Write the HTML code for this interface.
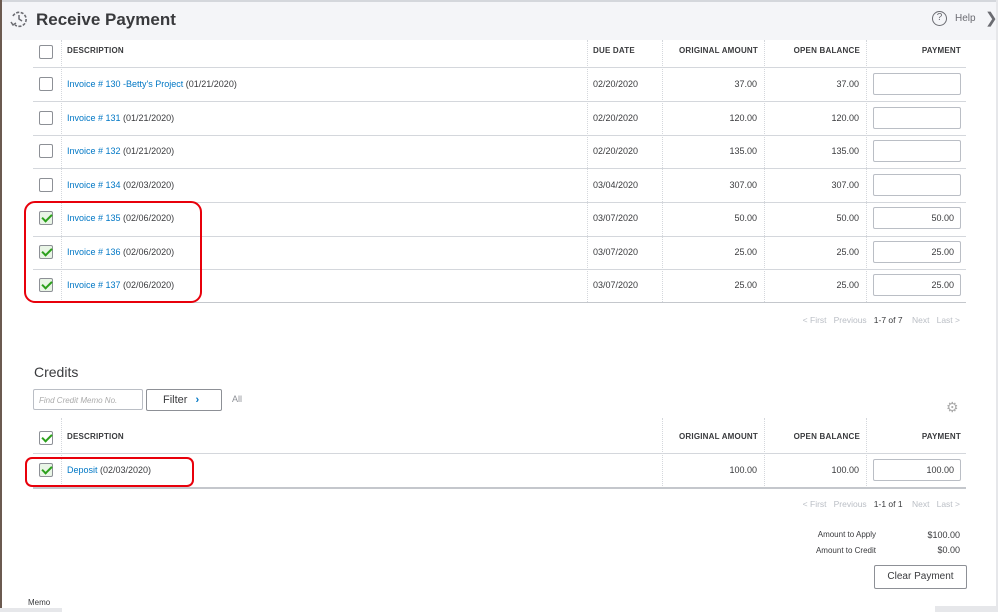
<!DOCTYPE html>
<html><head><meta charset="utf-8"><style>
*{margin:0;padding:0;box-sizing:border-box}
body{width:998px;height:612px;overflow:hidden;background:#fff;font-family:"Liberation Sans",sans-serif;position:relative;color:#393a3d}
.a{position:absolute}
.hd{font-size:8px;font-weight:bold;color:#393a3d;letter-spacing:.2px}
.t{font-size:9px;color:#393a3d;white-space:nowrap}
.lk{color:#0077c5}
.cb{position:absolute;width:14px;height:14px;border:1px solid #8d9096;border-radius:2px;background:#fff}
.cb.on{background:#e9f5e6}
.cb.on::after{content:"";position:absolute;left:4px;top:0px;width:4px;height:8px;border:solid #2ca01c;border-width:0 2px 2px 0;transform:rotate(45deg)}
.hl{position:absolute;height:1px;background:#d4d7dc}
.vl{position:absolute;width:0;border-left:1px dotted #d4d7dc}
.inp{position:absolute;width:88px;height:22px;border:1px solid #babec5;border-radius:2px;font-size:9px;text-align:right;padding:5px 6px 0 0;background:#fff}
.r{text-align:right}
.red{position:absolute;border:2px solid #e8000b;border-radius:11px}
.pg{font-size:8.5px;color:#babec5;white-space:nowrap;text-align:right;right:38px}
</style></head><body>
<div class="a" style="left:0;top:0;width:998px;height:40px;background:#f4f5f8;border-top:2px solid #d4d7dc"></div>
<div class="a" style="left:0;top:0;width:2px;height:612px;background:#6b5a50"></div>
<div class="a" style="left:996px;top:0;width:2px;height:612px;background:#e6e7ea"></div>
<svg class="a" style="left:9px;top:10px" width="20" height="18" viewBox="0 0 20 18"><path d="M4 6 A7 7 0 1 1 6 15" fill="none" stroke="#6b6c72" stroke-width="1.6" stroke-dasharray="3 1.5"/><path d="M10 5v4l3 2" fill="none" stroke="#6b6c72" stroke-width="1.5"/><path d="M2 12l2 3 3-2" fill="none" stroke="#6b6c72" stroke-width="1.5"/></svg>
<div class="a" style="left:36px;top:10px;font-size:17px;font-weight:bold;color:#393a3d">Receive Payment</div>
<div class="a" style="left:932px;top:11px;width:15px;height:15px;border:1.5px solid #6b6c72;border-radius:50%;font-size:10px;text-align:center;line-height:12px;color:#6b6c72">?</div>
<div class="a" style="left:955px;top:13px;font-size:10px;color:#6b6c72">Help</div>
<div class="a" style="left:985px;top:9px;font-size:15px;color:#6b6c72">&#x276F;</div>

<div class="vl" style="left:61px;top:40px;height:262px"></div>
<div class="vl" style="left:587px;top:40px;height:262px"></div>
<div class="vl" style="left:662px;top:40px;height:262px"></div>
<div class="vl" style="left:764px;top:40px;height:262px"></div>
<div class="vl" style="left:866px;top:40px;height:262px"></div>
<div class="cb" style="left:39px;top:45px"></div>
<div class="a hd" style="left:67px;top:46px">DESCRIPTION</div>
<div class="a hd" style="left:593px;top:46px">DUE DATE</div>
<div class="a hd r" style="left:662px;width:96px;top:46px">ORIGINAL AMOUNT</div>
<div class="a hd r" style="left:764px;width:96px;top:46px">OPEN BALANCE</div>
<div class="a hd r" style="left:866px;width:95px;top:46px">PAYMENT</div>
<div class="hl" style="left:33px;top:67px;width:933px"></div>

<div class="hl" style="left:33px;top:101px;width:933px"></div>
<div class="hl" style="left:33px;top:135px;width:933px"></div>
<div class="hl" style="left:33px;top:168px;width:933px"></div>
<div class="hl" style="left:33px;top:202px;width:933px"></div>
<div class="hl" style="left:33px;top:236px;width:933px"></div>
<div class="hl" style="left:33px;top:269px;width:933px"></div>
<div class="hl" style="left:33px;top:302px;width:933px;background:#c4c7cc"></div>

<div class="cb" style="left:39px;top:77px"></div><div class="a t" style="left:67px;top:79px"><span class="lk">Invoice # 130 -Betty's Project</span> (01/21/2020)</div><div class="a t" style="left:593px;top:79px">02/20/2020</div><div class="a t r" style="left:662px;width:95px;top:79px">37.00</div><div class="a t r" style="left:764px;width:95px;top:79px">37.00</div><div class="inp" style="left:873px;top:73px"></div>
<div class="cb" style="left:39px;top:111px"></div><div class="a t" style="left:67px;top:113px"><span class="lk">Invoice # 131</span> (01/21/2020)</div><div class="a t" style="left:593px;top:113px">02/20/2020</div><div class="a t r" style="left:662px;width:95px;top:113px">120.00</div><div class="a t r" style="left:764px;width:95px;top:113px">120.00</div><div class="inp" style="left:873px;top:107px"></div>
<div class="cb" style="left:39px;top:144px"></div><div class="a t" style="left:67px;top:146px"><span class="lk">Invoice # 132</span> (01/21/2020)</div><div class="a t" style="left:593px;top:146px">02/20/2020</div><div class="a t r" style="left:662px;width:95px;top:146px">135.00</div><div class="a t r" style="left:764px;width:95px;top:146px">135.00</div><div class="inp" style="left:873px;top:140px"></div>
<div class="cb" style="left:39px;top:178px"></div><div class="a t" style="left:67px;top:180px"><span class="lk">Invoice # 134</span> (02/03/2020)</div><div class="a t" style="left:593px;top:180px">03/04/2020</div><div class="a t r" style="left:662px;width:95px;top:180px">307.00</div><div class="a t r" style="left:764px;width:95px;top:180px">307.00</div><div class="inp" style="left:873px;top:174px"></div>
<div class="cb on" style="left:39px;top:211px"></div><div class="a t" style="left:67px;top:213px"><span class="lk">Invoice # 135</span> (02/06/2020)</div><div class="a t" style="left:593px;top:213px">03/07/2020</div><div class="a t r" style="left:662px;width:95px;top:213px">50.00</div><div class="a t r" style="left:764px;width:95px;top:213px">50.00</div><div class="inp" style="left:873px;top:207px">50.00</div>
<div class="cb on" style="left:39px;top:245px"></div><div class="a t" style="left:67px;top:247px"><span class="lk">Invoice # 136</span> (02/06/2020)</div><div class="a t" style="left:593px;top:247px">03/07/2020</div><div class="a t r" style="left:662px;width:95px;top:247px">25.00</div><div class="a t r" style="left:764px;width:95px;top:247px">25.00</div><div class="inp" style="left:873px;top:241px">25.00</div>
<div class="cb on" style="left:39px;top:278px"></div><div class="a t" style="left:67px;top:280px"><span class="lk">Invoice # 137</span> (02/06/2020)</div><div class="a t" style="left:593px;top:280px">03/07/2020</div><div class="a t r" style="left:662px;width:95px;top:280px">25.00</div><div class="a t r" style="left:764px;width:95px;top:280px">25.00</div><div class="inp" style="left:873px;top:274px">25.00</div>
<div class="red" style="left:24px;top:201px;width:178px;height:102px"></div>

<div class="a pg" style="top:315px">&lt; First &nbsp;&nbsp;Previous &nbsp;&nbsp;<span style="color:#393a3d">1-7 of 7</span> &nbsp;&nbsp;&nbsp;Next &nbsp;&nbsp;Last &gt;</div>

<div class="a" style="left:34px;top:364px;font-size:14px;color:#393a3d">Credits</div>
<div class="a" style="left:33px;top:389px;width:110px;height:21px;border:1px solid #babec5;border-radius:2px;font-size:8px;font-style:italic;color:#aaa;padding:6px 0 0 5px">Find Credit Memo No.</div>
<div class="a" style="left:146px;top:389px;width:76px;height:22px;border:1px solid #8d9096;border-radius:2px;font-size:11px;color:#393a3d;padding:4px 0 0 16px">Filter <span style="color:#0077c5;font-weight:bold;margin-left:5px">›</span></div>
<div class="a" style="left:232px;top:394px;font-size:9px;color:#8d9096">All</div>
<div class="a" style="left:946px;top:399px;font-size:14px;color:#aaa">⚙</div>

<div class="vl" style="left:61px;top:418px;height:70px"></div>
<div class="vl" style="left:662px;top:418px;height:70px"></div>
<div class="vl" style="left:764px;top:418px;height:70px"></div>
<div class="vl" style="left:866px;top:418px;height:70px"></div>
<div class="cb on" style="left:39px;top:431px;background:#fff"></div>
<div class="a hd" style="left:67px;top:432px">DESCRIPTION</div>
<div class="a hd r" style="left:662px;width:96px;top:432px">ORIGINAL AMOUNT</div>
<div class="a hd r" style="left:764px;width:96px;top:432px">OPEN BALANCE</div>
<div class="a hd r" style="left:866px;width:95px;top:432px">PAYMENT</div>
<div class="hl" style="left:33px;top:453px;width:933px"></div>
<div class="hl" style="left:33px;top:487px;width:933px;height:2px;background:#c4c7cc"></div>
<div class="cb on" style="left:39px;top:463px"></div><div class="a t" style="left:67px;top:465px"><span class="lk">Deposit</span> (02/03/2020)</div><div class="a t r" style="left:662px;width:95px;top:465px">100.00</div><div class="a t r" style="left:764px;width:95px;top:465px">100.00</div><div class="inp" style="left:873px;top:459px">100.00</div>
<div class="red" style="left:25px;top:457px;width:169px;height:30px;border-radius:7px"></div>

<div class="a pg" style="top:499px">&lt; First &nbsp;&nbsp;Previous &nbsp;&nbsp;<span style="color:#393a3d">1-1 of 1</span> &nbsp;&nbsp;&nbsp;Next &nbsp;&nbsp;Last &gt;</div>
<div class="a" style="left:780px;width:96px;top:530px;font-size:8px;text-align:right;color:#393a3d">Amount to Apply</div>
<div class="a" style="left:900px;width:60px;top:530px;font-size:9px;text-align:right">$100.00</div>
<div class="a" style="left:780px;width:96px;top:546px;font-size:8px;text-align:right;color:#393a3d">Amount to Credit</div>
<div class="a" style="left:900px;width:60px;top:545px;font-size:9px;text-align:right">$0.00</div>
<div class="a" style="left:874px;top:565px;width:93px;height:24px;border:1px solid #8d9096;border-radius:2px;font-size:10px;text-align:center;line-height:22px">Clear Payment</div>
<div class="a" style="left:28px;top:598px;font-size:8px">Memo</div>
<div class="a" style="left:0;top:608px;width:62px;height:4px;background:#e6e7ea"></div>
<div class="a" style="left:935px;top:606px;width:63px;height:6px;background:#e6e7ea"></div>
</body></html>
